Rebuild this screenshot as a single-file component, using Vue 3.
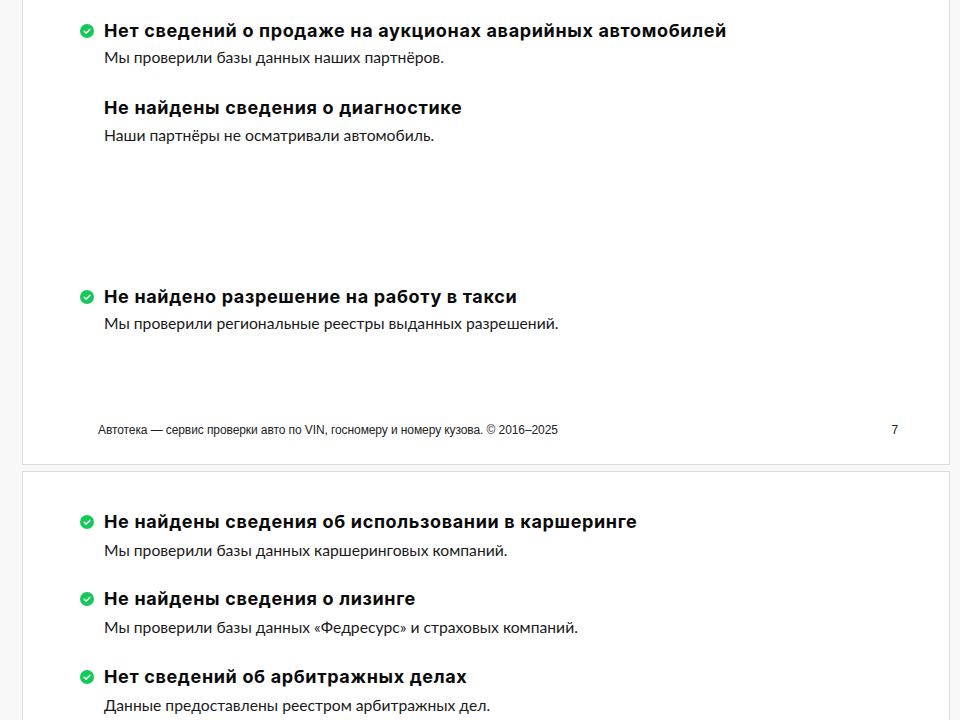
<script setup>
const first = [
  { t: 'Нет сведений о продаже на аукционах аварийных автомобилей', s: 'Мы проверили базы данных наших партнёров.', ok: true },
  { t: 'Не найдены сведения о диагностике', s: 'Наши партнёры не осматривали автомобиль.', ok: false },
]
const second = [
  { t: 'Не найдены сведения об использовании в каршеринге', s: 'Мы проверили базы данных каршеринговых компаний.' },
  { t: 'Не найдены сведения о лизинге', s: 'Мы проверили базы данных «Федресурс» и страховых компаний.' },
  { t: 'Нет сведений об арбитражных делах', s: 'Данные предоставлены реестром арбитражных дел.' },
]
</script>

<template>
  <div class="viewport">
    <section class="card card-first">
      <div class="list list-a">
        <article v-for="i in first" :key="i.t" class="item" :class="{ loose: !i.ok }">
          <svg v-if="i.ok" class="check" viewBox="0 0 14 14"><circle cx="7" cy="7" r="7" fill="#14c85a"/><path d="M4.2 7.2l2 1.9 3.6-3.7" fill="none" stroke="#fff" stroke-width="1.5" stroke-linecap="round" stroke-linejoin="round"/></svg>
          <h3 class="title">{{ i.t }}</h3>
          <p class="sub">{{ i.s }}</p>
        </article>
      </div>
      <article class="item taxi">
        <svg class="check" viewBox="0 0 14 14"><circle cx="7" cy="7" r="7" fill="#14c85a"/><path d="M4.2 7.2l2 1.9 3.6-3.7" fill="none" stroke="#fff" stroke-width="1.5" stroke-linecap="round" stroke-linejoin="round"/></svg>
        <h3 class="title">Не найдено разрешение на работу в такси</h3>
        <p class="sub">Мы проверили региональные реестры выданных разрешений.</p>
      </article>
      <footer class="foot">
        <span>Автотека — сервис проверки авто по VIN, госномеру и номеру кузова. © 2016–2025</span>
        <span>7</span>
      </footer>
    </section>
    <section class="card card-second">
      <article v-for="i in second" :key="i.t" class="item wide">
        <svg class="check" viewBox="0 0 14 14"><circle cx="7" cy="7" r="7" fill="#14c85a"/><path d="M4.2 7.2l2 1.9 3.6-3.7" fill="none" stroke="#fff" stroke-width="1.5" stroke-linecap="round" stroke-linejoin="round"/></svg>
        <h3 class="title">{{ i.t }}</h3>
        <p class="sub">{{ i.s }}</p>
      </article>
    </section>
  </div>
</template>

<style>
html, body { margin: 0; background: #f8f8f8; overflow: hidden; }
</style>

<style scoped>
.viewport { height: 720px; overflow: hidden; padding: 0 10px 0 22px; display: flex; flex-direction: column; gap: 6px; }
.card { width: 928px; box-sizing: border-box; background: #fff; border: 1px solid #dcdcdc; flex: none; padding: 0 51px 0 57px; }
.card-first { border-top: 0; height: 465px; padding-top: 19px; display: flex; flex-direction: column; }
.card-second { padding-top: 38px; height: 300px; }
.list-a { display: flex; flex-direction: column; gap: 28px; height: 266px; }
.item { position: relative; padding-left: 24px; }
.wide { margin-bottom: 26px; }
.wide:nth-child(2) { margin-bottom: 27px; }
.check { position: absolute; left: 0; top: 5px; width: 14px; height: 14px; }
.title { margin: 0; font: 700 18px/24px "Inter", sans-serif; letter-spacing: 0.65px; color: #0a0a0a; }
.sub { margin: 4px 0 0; font: 400 15.7px/21px "Lato", sans-serif; color: #1a1a1a; }
.loose .sub { margin-top: 5px; }
.wide .sub { margin-top: 6px; }
.foot { margin-top: auto; margin-bottom: 26px; padding: 0 0 0 18px; display: flex; justify-content: space-between; font: 400 12px/16px "Liberation Sans", sans-serif; letter-spacing: -0.09px; color: #222; }
</style>
